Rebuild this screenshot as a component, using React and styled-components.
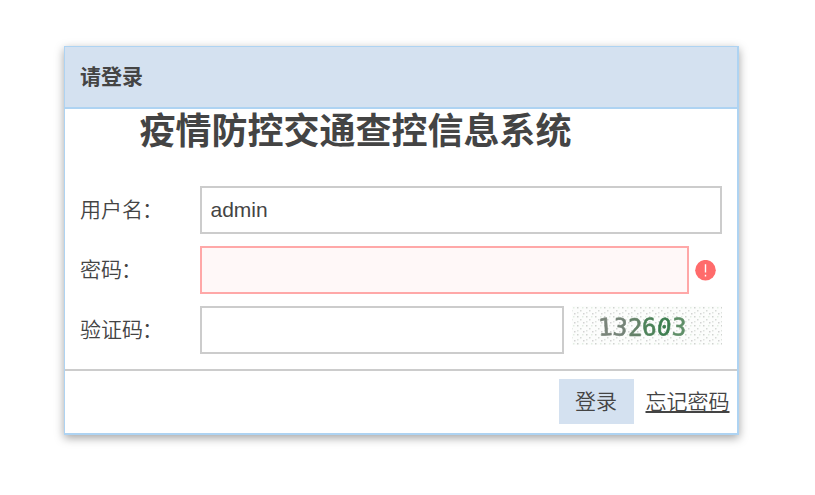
import React from "react";
import styled, { createGlobalStyle } from "styled-components";

const Global = createGlobalStyle`
  * { box-sizing: border-box; }
  body {
    margin: 0;
    background: #fff;
    color: #444;
    font: 21px/30px "Liberation Sans", "Noto Sans CJK SC", sans-serif;
  }
`;

const Page = styled.main`
  height: 495px;
  padding: 46px 0 0 64px;
  overflow: hidden;
`;

const Panel = styled.section`
  display: flex;
  flex-direction: column;
  width: 675px;
  height: 389px;
  border: solid #aed3f2;
  border-width: 1px 2px 2px 1px;
  background: #fff;
  box-shadow: 0 3px 9px rgba(0, 0, 0, 0.36);
`;

const Header = styled.header`
  height: 62px;
  padding: 15px 15px 0;
  border-bottom: 2px solid #aed3f2;
  background: #d4e1f0;
  font-weight: 700;
`;

const Title = styled.h1`
  height: 77px;
  margin: 0;
  padding-left: 74.5px;
  font-size: 36px;
  line-height: 45px;
  font-weight: 700;
  white-space: nowrap;
`;

const Form = styled.div`
  display: flex;
  flex-direction: column;
  gap: 12px;
  height: 183px;
  padding: 0 15px;
`;

const Row = styled.div`
  display: flex;
  height: 48px;
  align-items: center;
`;

const Label = styled.label`
  width: 120px;
  flex: none;
  font-weight: 350;
`;

const Colon = styled.span`
  margin-left: -1px;
`;

const Input = styled.input`
  flex: none;
  width: ${(p) => p.$width}px;
  height: 48px;
  padding: 0 9px 0 8.5px;
  border: 2px solid ${(p) => (p.$invalid ? "#ffa8a8" : "#ccc")};
  border-radius: 0;
  outline: none;
  background: ${(p) => (p.$invalid ? "#fff8f8" : "#fff")};
  color: #444;
  font: 21px "Liberation Sans", sans-serif;
`;

const ErrorIcon = styled.svg`
  width: 21px;
  height: 21px;
  margin-left: 6px;
`;

const Captcha = styled.svg`
  align-self: flex-start;
  width: 150px;
  height: 39px;
  margin-left: 8px;
`;

const Footer = styled.footer`
  display: flex;
  flex: 1;
  align-items: flex-start;
  justify-content: flex-end;
  gap: 11.5px;
  padding: 8px 7.5px 0;
  border-top: 2px solid #ccc;
`;

const Button = styled.button`
  width: 75px;
  height: 45px;
  padding: 0 1px 0 0;
  border: 0;
  background: #d4e1f0;
  color: #444;
  font: 350 21px/45px "Liberation Sans", "Noto Sans CJK SC", sans-serif;
`;

const Link = styled.a`
  color: #444;
  font-weight: 350;
  line-height: 45px;
  text-decoration: underline;
  text-decoration-thickness: 2px;
  text-underline-offset: 2px;
`;

const digits = [
  { x: 598, value: "1", color: "#7a857a", angle: -3 },
  { x: 613, value: "3", color: "#758478", angle: 6 },
  { x: 628, value: "2", color: "#66836a", angle: 0 },
  { x: 642, value: "6", color: "#4d8259", angle: -3 },
  { x: 657, value: "0", color: "#3d7e50", angle: 9 },
  { x: 672, value: "3", color: "#5f8f68", angle: 3 },
];

export default function App() {
  return (
    <Page>
      <Global />
      <Panel>
        <Header>请登录</Header>
        <Title>疫情防控交通查控信息系统</Title>
        <Form>
          <Row>
            <Label htmlFor="user">用户名<Colon>：</Colon></Label>
            <Input id="user" $width={522} defaultValue="admin" />
          </Row>
          <Row>
            <Label htmlFor="password">密码<Colon>：</Colon></Label>
            <Input id="password" type="password" $width={489} $invalid />
            <ErrorIcon viewBox="0 0 21 21">
              <circle cx="10.5" cy="10.2" r="10.3" fill="#ff6b6b" />
              <path d="M10.5 4.2v8.2M10.5 14.7v1.7" stroke="#fff" strokeWidth="1.4" />
            </ErrorIcon>
          </Row>
          <Row>
            <Label htmlFor="code">验证码<Colon>：</Colon></Label>
            <Input id="code" $width={364} />
            <Captcha viewBox="572 306 150 39">
              <defs>
                <pattern id="dots" width="9" height="9" patternUnits="userSpaceOnUse">
                  <rect x="1" y="1" width="1.5" height="1.5" fill="#d0d3d0" />
                  <rect x="4" y="4" width="1.5" height="1.5" fill="#d6dad6" />
                  <rect x="7" y="7" width="1.5" height="1.5" fill="#d3d3d3" />
                  <rect x="6" y="1" width="1.5" height="1.5" fill="#e2ede2" />
                  <rect x="1" y="6" width="1.5" height="1.5" fill="#dfe3df" />
                </pattern>
                <filter id="soften">
                  <feGaussianBlur stdDeviation="0.7" />
                </filter>
              </defs>
              <rect x="572" y="306" width="150" height="39" fill="#fcfdfc" />
              <rect x="572" y="306" width="150" height="39" fill="url(#dots)" />
              <g filter="url(#soften)" fontFamily="DejaVu Sans Mono" fontSize="24">
                {digits.map((d) => (
                  <text
                    key={d.x}
                    x={d.x}
                    y="335.5"
                    fill={d.color}
                    stroke={d.color}
                    strokeWidth="0.6"
                    transform={`rotate(${d.angle} ${d.x + 7} 327)`}
                  >
                    {d.value}
                  </text>
                ))}
              </g>
            </Captcha>
          </Row>
        </Form>
        <Footer>
          <Button type="button">登录</Button>
          <Link>忘记密码</Link>
        </Footer>
      </Panel>
    </Page>
  );
}
